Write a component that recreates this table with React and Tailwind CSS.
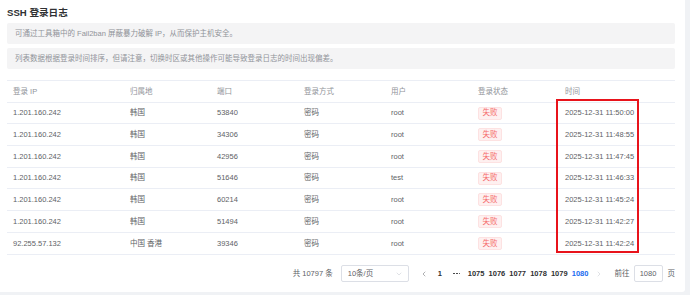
import { ChevronLeft, ChevronRight, ChevronDown } from 'lucide-react'

const rows = [
  ['1.201.160.242', '韩国', '53840', '密码', 'root', '2025-12-31 11:50:00'],
  ['1.201.160.242', '韩国', '34306', '密码', 'root', '2025-12-31 11:48:55'],
  ['1.201.160.242', '韩国', '42956', '密码', 'root', '2025-12-31 11:47:45'],
  ['1.201.160.242', '韩国', '51646', '密码', 'test', '2025-12-31 11:46:33'],
  ['1.201.160.242', '韩国', '60214', '密码', 'root', '2025-12-31 11:45:24'],
  ['1.201.160.242', '韩国', '51494', '密码', 'root', '2025-12-31 11:42:27'],
  ['92.255.57.132', '中国 香港', '39346', '密码', 'root', '2025-12-31 11:42:24'],
]

const cols = ['登录 IP', '归属地', '端口', '登录方式', '用户', '登录状态', '时间']
const widths = ['w-[117px]', 'w-[87px]', 'w-[87px]', 'w-[87px]', 'w-[87px]', 'w-[87px]', 'flex-1']

export default function App() {
  return (
    <div className="w-[690px] h-[295px] bg-[#f0f2f5] overflow-hidden text-[7.5px] text-[#606266]"
         style={{ fontFamily: '"Liberation Sans", "Noto Sans CJK SC", sans-serif' }}>
      <div className="relative w-[685px] h-[292px] bg-white rounded-br-[3px] pl-[7px] pr-[10px]">
        <h1 className="h-[23px] pt-[6px] text-[9.6px] font-bold text-[#303133] leading-[13px]">SSH 登录日志</h1>

        <div className="h-[21px] flex items-center px-[8px] bg-[#f4f4f5] rounded-[2px] text-[#909399]">
          可通过工具箱中的 Fail2ban 屏蔽暴力破解 IP，从而保护主机安全。
        </div>
        <div className="h-[21px] mt-[4px] flex items-center px-[8px] bg-[#f4f4f5] rounded-[2px] text-[#909399]">
          列表数据根据登录时间排序，但请注意，切换时区或其他操作可能导致登录日志的时间出现偏差。
        </div>

        <div className="mt-[11px] border-t border-[#ebeef5]">
          <div className="flex h-[21.7px] items-center border-b border-[#ebeef5] text-[#909399]">
            {cols.map((c, i) => (
              <div key={c} className={`${widths[i]} px-[6px]`}>{c}</div>
            ))}
          </div>
          {rows.map((r, ri) => (
            <div key={ri} className="flex h-[21.7px] items-center border-b border-[#ebeef5]">
              <div className="w-[117px] px-[6px]">{r[0]}</div>
              <div className="w-[87px] px-[6px]">{r[1]}</div>
              <div className="w-[87px] px-[6px]">{r[2]}</div>
              <div className="w-[87px] px-[6px]">{r[3]}</div>
              <div className="w-[87px] px-[6px]">{r[4]}</div>
              <div className="w-[87px] px-[6px]">
                <span className="inline-flex h-[13px] w-[24px] items-center justify-center rounded-[2px] bg-[#fef0f0] border border-[#fde2e2] text-[#f56c6c]">失败</span>
              </div>
              <div className="flex-1 px-[6px]">{r[5]}</div>
            </div>
          ))}
        </div>

        <div className="flex items-center justify-end h-[38px] text-[#606266]">
          <span>共 10797 条</span>
          <div className="ml-[8px] w-[68px] h-[17px] border border-[#dcdfe6] rounded-[2px] flex items-center justify-between pl-[6px] pr-[5px]">
            <span>10条/页</span>
            <ChevronDown className="w-[8px] h-[8px] text-[#c0c4cc]" strokeWidth={1.5} />
          </div>
          <div className="ml-[7px] w-[16px] flex justify-center text-[#606266]">
            <ChevronLeft className="w-[8px] h-[8px]" strokeWidth={1.5} />
          </div>
          <div className="w-[16px] text-center font-bold text-[#303133]">1</div>
          <div className="w-[18px] flex justify-center gap-[1px]">
            <span className="w-[1.8px] h-[1.8px] rounded-full bg-[#303133]" />
            <span className="w-[1.8px] h-[1.8px] rounded-full bg-[#303133]" />
            <span className="w-[1.8px] h-[1.8px] rounded-full bg-[#303133]" />
          </div>
          {['1075', '1076', '1077', '1078', '1079', '1080'].map(n => (
            <div key={n} className={`w-[20.8px] text-center font-bold ${n === '1080' ? 'text-[#1a6bf0]' : 'text-[#303133]'}`}>{n}</div>
          ))}
          <div className="w-[16px] flex justify-center text-[#c0c4cc]">
            <ChevronRight className="w-[8px] h-[8px]" strokeWidth={1.5} />
          </div>
          <span className="ml-[8px]">前往</span>
          <div className="ml-[4px] w-[29px] h-[17px] border border-[#dcdfe6] rounded-[2px] flex items-center justify-center">1080</div>
          <span className="ml-[5px]">页</span>
        </div>

        <div className="absolute left-[555.7px] top-[99px] w-[83.3px] h-[154px] border-2 border-[#e8131b]" />
      </div>
    </div>
  )
}
